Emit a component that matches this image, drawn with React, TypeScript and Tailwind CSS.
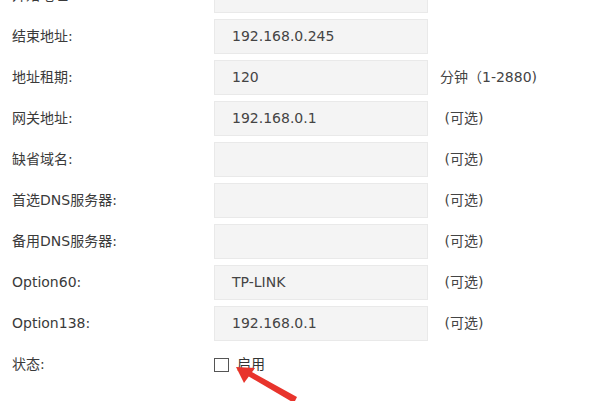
const font = { fontFamily: '"DejaVu Sans", "Noto Sans CJK SC", sans-serif' };

type Row = { label: string; value: string; note?: string };

const rows: Row[] = [
  { label: "开始地址:", value: "192.168.0.100" },
  { label: "结束地址:", value: "192.168.0.245" },
  { label: "地址租期:", value: "120", note: "分钟（1-2880)" },
  { label: "网关地址:", value: "192.168.0.1", note: " (可选)" },
  { label: "缺省域名:", value: "", note: " (可选)" },
  { label: "首选DNS服务器:", value: "", note: " (可选)" },
  { label: "备用DNS服务器:", value: "", note: " (可选)" },
  { label: "Option60:", value: "TP-LINK", note: " (可选)" },
  { label: "Option138:", value: "192.168.0.1", note: " (可选)" },
];

export default function App() {
  return (
    <div className="relative w-[600px] h-[401px] overflow-hidden bg-white text-[14px]" style={font}>
      <div className="flex flex-col gap-[6px] pl-[12px] mt-[-22px]">
        {rows.map(r => (
          <div key={r.label} className="flex items-center h-[35px]">
            <div className="w-[202px] shrink-0 text-[#3a3a3a]">{r.label}</div>
            <div className="w-[214px] h-[35px] shrink-0 bg-[#f4f4f4] border border-[#e9e9e9] flex items-center">
              <span className="block pl-[17px] text-[#444]">{r.value}</span>
            </div>
            {r.note ? (
              <div className="ml-[12px] text-[#444] whitespace-pre">{r.note}</div>
            ) : null}
          </div>
        ))}
        <div className="flex items-center h-[35px]">
          <div className="w-[202px] shrink-0 text-[#3a3a3a]">状态:</div>
          <div className="flex items-center gap-[8px] text-[#333]">
            <span className="w-[15px] h-[14px] border border-[#555] bg-white inline-block" />
            <span>启用</span>
          </div>
        </div>
      </div>
      {/* red annotation arrow */}
      <svg className="absolute left-0 top-0" width="600" height="401" viewBox="0 0 600 401">
        <path d="M294 403 L248 376 L250 371 L297 397 Z" fill="#e8342c" />
        <path d="M236 367 L255 368 L244 383 Z" fill="#e8342c" />
      </svg>
    </div>
  );
}
